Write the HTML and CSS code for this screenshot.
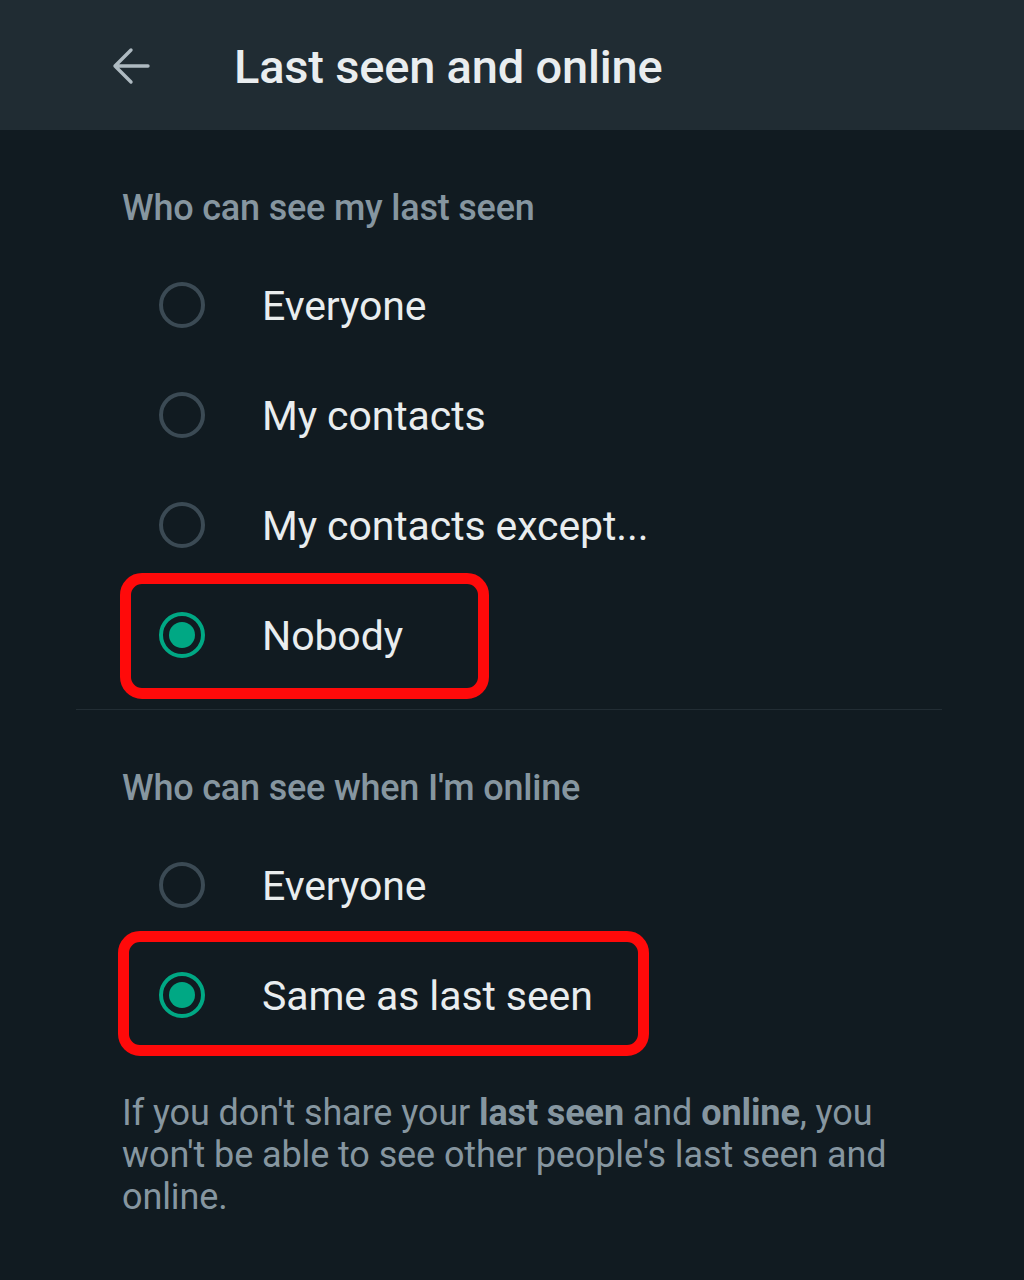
FILE: index.html
```html
<!DOCTYPE html>
<html lang="en">
<head>
<meta charset="utf-8">
<title>Last seen and online</title>
<link rel="stylesheet" href="styles.css">
</head>
<body>
<header class="appbar">
  <svg class="back" viewBox="0 0 38 38" width="38" height="38" aria-hidden="true">
    <path d="M36 19H3M19 3L3 19L19 35" fill="none" stroke="#aebac1" stroke-width="3.4" stroke-linecap="round" stroke-linejoin="round"/>
  </svg>
  <h1 class="title">Last seen and online</h1>
</header>
<main class="content">
  <section class="group">
    <h2 class="heading">Who can see my last seen</h2>
    <div class="option"><span class="radio"></span><span class="label">Everyone</span></div>
    <div class="option"><span class="radio"></span><span class="label">My contacts</span></div>
    <div class="option"><span class="radio"></span><span class="label">My contacts except...</span></div>
    <div class="option marked mark-a"><span class="radio checked"></span><span class="label">Nobody</span></div>
  </section>
  <hr class="divider">
  <section class="group">
    <h2 class="heading">Who can see when I'm online</h2>
    <div class="option"><span class="radio"></span><span class="label">Everyone</span></div>
    <div class="option marked mark-b"><span class="radio checked"></span><span class="label">Same as last seen</span></div>
  </section>
  <p class="note">If you don't share your <b>last seen</b> and <b>online</b>, you won't be able to see other people's last seen and online.</p>
</main>
</body>
</html>
```
FILE: styles.css
```css
*, *::before, *::after { box-sizing: border-box; }
html, body { margin: 0; padding: 0; }
body {
  background: #111b21;
  font-family: Roboto, "Noto Sans", Arial, sans-serif;
  width: 1024px;
  min-height: 1280px;
}
.appbar {
  height: 130px;
  background: #202c33;
  display: flex;
  align-items: center;
  padding-left: 112px;
  gap: 84px;
}
.back { display: block; flex: none; margin-top: 2px; }
.title {
  margin: 0;
  color: #e9edef;
  font-weight: 500;
  font-size: 47px;
  line-height: 56px;
  letter-spacing: -0.2px;
  margin-top: 4px;
}
.content { padding: 0; }
.heading {
  margin: 0;
  padding: 56px 0 20px 122px;
  font-size: 36px;
  line-height: 44px;
  font-weight: 500;
  color: #8696a0;
  letter-spacing: -0.2px;
}
.option {
  height: 110px;
  display: flex;
  align-items: center;
  padding-left: 159px;
  gap: 57px;
  position: relative;
}
.radio {
  flex: none;
  width: 46px;
  height: 46px;
  border-radius: 50%;
  border: 4px solid #3b4a54;
  position: relative;
}
.radio.checked { border-color: #00a884; }
.radio.checked::after {
  content: "";
  position: absolute;
  left: 6px; top: 6px;
  width: 26px; height: 26px;
  border-radius: 50%;
  background: #00a884;
}
.label {
  color: #e9edef;
  font-size: 41px;
  line-height: 48px;
  font-weight: 400;
  letter-spacing: -0.1px;
  margin-top: 2px;
}
.marked::before {
  content: "";
  position: absolute;
  border: 11px solid #ff0a0a;
  border-radius: 22px;
}
.mark-a::before { left: 120px; width: 369px; top: -7px; bottom: -9px; }
.mark-b::before { left: 118px; width: 531px; top: -9px; bottom: -6px; }
.divider {
  margin: 19px 82px 0 76px;
  border: 0;
  height: 1px;
  background: #222d34;
}
.note {
  margin: 0;
  padding: 42px 0 0 122px;
  width: 900px;
  color: #8696a0;
  font-size: 36px;
  line-height: 42px;
  letter-spacing: -0.1px;
}
.note b { font-weight: 700; }
```
